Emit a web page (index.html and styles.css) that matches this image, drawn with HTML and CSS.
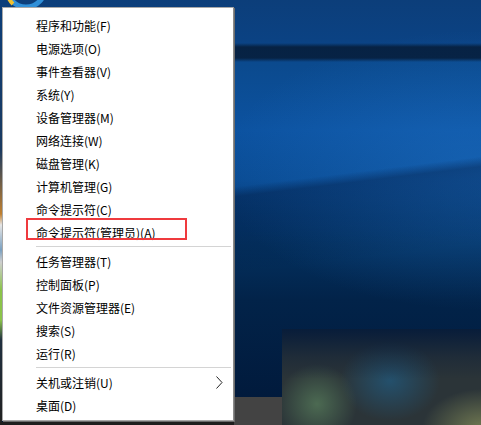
FILE: index.html
```html
<!DOCTYPE html>
<html>
<head>
    <title>Win+X 菜单</title>
    <link rel="stylesheet" href="styles.css">
</head>
<body>
    <div class="desktop">
        <svg class="ie-icon" width="44" height="10" viewBox="0 0 44 10">
            <circle cx="22" cy="-12" r="19" fill="none" stroke="#2f8fd8" stroke-width="5"/>
            <path d="M4 -4 A19 19 0 0 0 9 4" fill="none" stroke="#f2c12e" stroke-width="4"/>
        </svg>
        <div class="taskbar"></div>
        <div class="photo"></div>

        <ul class="menu">
            <li class="item">程序和功能(F)</li>
            <li class="item">电源选项(O)</li>
            <li class="item">事件查看器(V)</li>
            <li class="item">系统(Y)</li>
            <li class="item">设备管理器(M)</li>
            <li class="item">网络连接(W)</li>
            <li class="item">磁盘管理(K)</li>
            <li class="item">计算机管理(G)</li>
            <li class="item">命令提示符(C)</li>
            <li class="item marked">命令提示符(管理员)(A)</li>
            <li class="separator"></li>
            <li class="item">任务管理器(T)</li>
            <li class="item">控制面板(P)</li>
            <li class="item">文件资源管理器(E)</li>
            <li class="item">搜索(S)</li>
            <li class="item">运行(R)</li>
            <li class="separator"></li>
            <li class="item has-sub">
                <span>关机或注销(U)</span>
                <svg class="chevron" width="7" height="13" viewBox="0 0 7 13">
                    <polyline points="0.5,0.5 6,6.5 0.5,12.5" fill="none" stroke="#222" stroke-width="1"/>
                </svg>
            </li>
            <li class="item">桌面(D)</li>
        </ul>
    </div>
</body>
</html>
```

FILE: styles.css
```css
body {
    margin: 0;
    font-family: "Noto Sans CJK SC", "Noto Sans", sans-serif;
}
.desktop {
    position: relative;
    width: 481px;
    height: 425px;
    overflow: hidden;
    padding: 7px 0 0 2px;
    box-sizing: border-box;
    background:
        linear-gradient(to bottom, transparent 43px, rgba(6, 28, 56, 0.85) 47px, rgba(6, 28, 56, 0.85) 58px, transparent 62px),
        linear-gradient(173deg, transparent 214px, rgba(0, 16, 48, 0.35) 224px, transparent 300px),
        radial-gradient(ellipse 260px 140px at 100% 40%, rgba(40, 130, 220, 0.35), transparent),
        linear-gradient(to bottom, #0c3e7a 0, #0b4283 40px, #0b4a8e 64px, #0c52a0 130px, #0a4c94 180px, #053a74 215px, #03305f 245px, #022349 300px, #011a3c 400px);
}
.desktop::before {
    /* left strip of other desktop icons */
    content: "";
    position: absolute;
    left: 0;
    top: 0;
    width: 2px;
    height: 425px;
    background: linear-gradient(to bottom, #0c3e7a 0, #1a3a60 150px, #c08030 214px, #e6e6e6 225px, #7aa0c0 250px, #cfcfcf 262px, #8bc34a 290px, #8bc34a 320px, #203040 340px, #202020 425px);
}
.desktop::after {
    /* dark strip under the menu */
    content: "";
    position: absolute;
    left: 0;
    top: 422px;
    width: 234px;
    height: 3px;
    background: #1e1e1e;
}
.ie-icon {
    position: absolute;
    left: 4px;
    top: 0;
}
.taskbar {
    position: absolute;
    left: 234px;
    top: 397px;
    width: 48px;
    height: 28px;
    background: #434343;
}
.photo {
    position: absolute;
    left: 282px;
    top: 329px;
    right: 0;
    bottom: 0;
    background:
        linear-gradient(to bottom, rgba(4, 26, 58, 0.9) 0, rgba(4, 26, 58, 0.3) 28px, transparent 50px),
        radial-gradient(ellipse 40px 40px at 35px 75px, #4c6a52, transparent),
        radial-gradient(ellipse 50px 40px at 108px 52px, #24506c, transparent),
        radial-gradient(ellipse 60px 40px at 200px 100px, #727a52, transparent),
        #2b3438;
}
.menu {
    position: relative;
    list-style: none;
    margin: 0;
    width: 232px;
    box-sizing: border-box;
    padding: 6px 0 3px;
    background-color: #ffffff;
    border: 1px solid #a8a8a8;
    border-right-color: #8a8a8a;
    box-shadow: 1px 1px 0 #6c6c6c;
    font-size: 12px;
    color: #000000;
}
.item {
    position: relative;
    display: flex;
    align-items: center;
    justify-content: space-between;
    height: 23px;
    padding: 0 10px 0 33px;
    white-space: nowrap;
}
.item.marked::after {
    content: "";
    position: absolute;
    left: 23px;
    top: -3px;
    width: 161px;
    height: 22px;
    box-sizing: border-box;
    border: 2px solid #ef3a3e;
}
.separator {
    height: 1px;
    margin: 2px 2px 3px 33px;
    background-color: #d4d4d4;
}
.chevron {
    display: block;
}
```
